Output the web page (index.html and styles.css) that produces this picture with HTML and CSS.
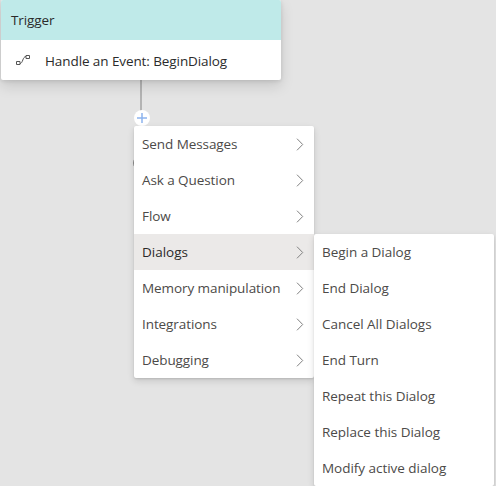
FILE: index.html
```html
<!DOCTYPE html>
<html lang="en">
<head>
<meta charset="utf-8">
<title>Dialog flow</title>
<link rel="stylesheet" href="styles.css">
</head>
<body>
<svg class="defs" width="0" height="0"><symbol id="chevron" viewBox="0 0 8 13"><path d="M1 .7 6.7 6.5 1 12.3" fill="none" stroke="currentColor"/></symbol></svg>
<main class="canvas">
  <section class="card">
    <header class="card-title">Trigger</header>
    <div class="card-body">
      <svg class="flow-icon" width="16" height="12" viewBox="0 0 16 12" fill="none" stroke="#555"><path d="M1.500 8.500h3.500v3h-3.500zM11 2.500h3.500v3h-3.500zM5 10.500C8 10.500 7.500 3.500 11 3.500"/></svg>
      <span class="event">Handle an Event: BeginDialog</span>
    </div>
  </section>
  <div class="connector"></div>
  <div class="add"><svg width="16" height="16" viewBox="0 0 16 16"><path d="M8 3v10M3 8h10" stroke="#8db4ee" stroke-width="1.5"/></svg></div>
  <div class="end-node"></div>
  <ul class="menu main-menu">
    <li><span>Send Messages</span><svg><use href="#chevron"/></svg></li>
    <li><span>Ask a Question</span><svg><use href="#chevron"/></svg></li>
    <li><span>Flow</span><svg><use href="#chevron"/></svg></li>
    <li class="active"><span>Dialogs</span><svg><use href="#chevron"/></svg></li>
    <li><span>Memory manipulation</span><svg><use href="#chevron"/></svg></li>
    <li><span>Integrations</span><svg><use href="#chevron"/></svg></li>
    <li><span>Debugging</span><svg><use href="#chevron"/></svg></li>
  </ul>
  <ul class="menu sub-menu">
    <li><span>Begin a Dialog</span></li>
    <li><span>End Dialog</span></li>
    <li><span>Cancel All Dialogs</span></li>
    <li><span>End Turn</span></li>
    <li><span>Repeat this Dialog</span></li>
    <li><span>Replace this Dialog</span></li>
    <li><span>Modify active dialog</span></li>
  </ul>
</main>
</body>
</html>
```
FILE: styles.css
```css
* { box-sizing: border-box; }
body { margin: 0; overflow: hidden; font: 13.5px/20px "Open Sans", sans-serif; }
.defs { position: absolute; }
.canvas { position: relative; width: 496px; height: 486px; overflow: hidden; background: #e4e4e4; }
.card { position: absolute; left: 1px; top: 0; width: 280px; height: 80px; background: #fff; border-radius: 2px; box-shadow: 0 6px 14px rgba(0,0,0,.13), 0 1px 4px rgba(0,0,0,.11); color: #2b2b2b; letter-spacing: -.09px; overflow: hidden; z-index: 1; }
.card-title { height: 40px; padding: 10px; background: #bfeae9; }
.card-body { display: flex; align-items: center; height: 40px; padding: 2px 0 0 14px; }
.flow-icon { margin: -4px 14px 0 0; }
.connector { position: absolute; left: 140px; top: 80px; width: 2px; height: 32px; background: #b3b3b3; }
.add { position: absolute; left: 134px; top: 110px; width: 16px; height: 16px; border-radius: 50%; background: #fff; }
.add svg { display: block; }
.end-node { position: absolute; left: 133px; top: 155px; width: 16px; height: 16px; border: 1px solid #888; border-radius: 50%; }
.menu { position: absolute; width: 180px; margin: 0; padding: 0; list-style: none; background: #fff; color: #4c4a48; letter-spacing: -.03px; border-radius: 2px; box-shadow: 0 3px 7px rgba(0,0,0,.13), 0 1px 2px rgba(0,0,0,.11); }
.main-menu { left: 134px; top: 126px; letter-spacing: -.08px; }
.sub-menu { left: 314px; top: 234px; }
.menu li { display: flex; align-items: center; justify-content: space-between; height: 36px; padding: 0 10px 0 8px; white-space: nowrap; }
.menu li.active { background: #ebe9e8; color: #2b2a29; letter-spacing: 0; }
.menu svg { width: 8px; height: 13px; color: #808080; }
```
